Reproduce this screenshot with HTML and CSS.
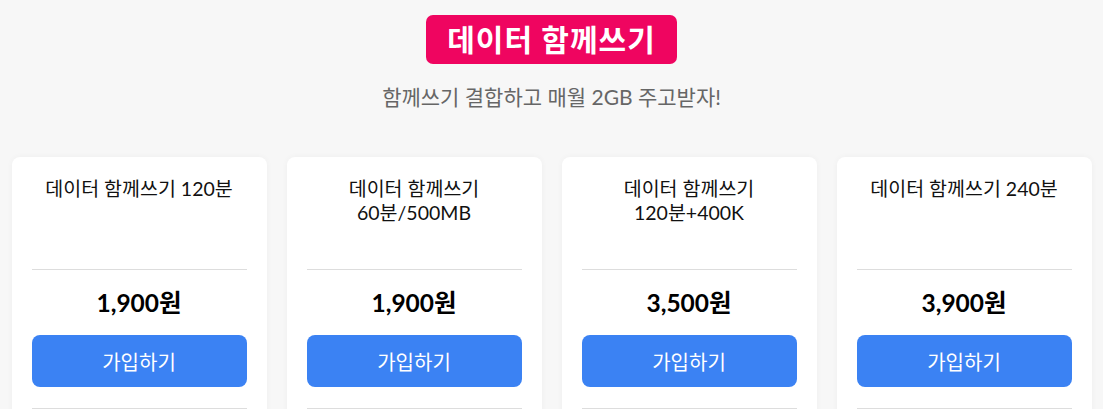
FILE: index.html
```html
<!DOCTYPE html>
<html lang="ko">
<head>
    <meta charset="UTF-8">
    <title>데이터 함께쓰기</title>
    <link rel="stylesheet" href="styles.css">
</head>
<body>
    <header>
        <h1>데이터 함께쓰기</h1>
        <p class="subtitle">함께쓰기 결합하고 매월 2GB 주고받자!</p>
    </header>
    <div id="plans">
        <div class="card">
            <div class="title">데이터 함께쓰기 120분</div>
            <div class="price">1,900원</div>
            <button type="button">가입하기</button>
            <div class="more"></div>
        </div>
        <div class="card">
            <div class="title">데이터 함께쓰기<br>60분/500MB</div>
            <div class="price">1,900원</div>
            <button type="button">가입하기</button>
            <div class="more"></div>
        </div>
        <div class="card">
            <div class="title">데이터 함께쓰기<br>120분+400K</div>
            <div class="price">3,500원</div>
            <button type="button">가입하기</button>
            <div class="more"></div>
        </div>
        <div class="card">
            <div class="title">데이터 함께쓰기 240분</div>
            <div class="price">3,900원</div>
            <button type="button">가입하기</button>
            <div class="more"></div>
        </div>
    </div>
</body>
</html>
```

FILE: styles.css
```css
body {
    font-family: Lato, "Noto Sans CJK KR", sans-serif;
    margin: 0;
    padding: 0;
    background-color: #f7f7f7;
    color: #111;
}

header {
    text-align: center;
    padding-top: 15px;
}

h1 {
    display: inline-block;
    margin: 0;
    padding: 0 21px;
    height: 49px;
    line-height: 48px;
    font-size: 30px;
    font-weight: bold;
    letter-spacing: 1px;
    color: #fff;
    background-color: #ef0560;
    border-radius: 7px;
}

.subtitle {
    margin: 19px 0 0;
    font-size: 21px;
    line-height: 28px;
    color: #666;
}

#plans {
    max-width: 1080px;
    margin: 46px auto 0;
    display: grid;
    grid-template-columns: repeat(4, 1fr);
    gap: 20px;
}

.card {
    background-color: #fff;
    border-radius: 8px;
    padding: 20px 20px 0;
    box-shadow: 0 0 6px rgba(0, 0, 0, 0.04);
}

.title {
    min-height: 72px;
    padding-bottom: 20px;
    border-bottom: 1px solid #ddd;
    text-align: center;
    font-size: 19.5px;
    line-height: 24px;
}

.price {
    padding: 17px 0;
    text-align: center;
    font-size: 24.5px;
    font-weight: bold;
    line-height: 31px;
    color: #000;
}

button {
    display: block;
    width: 100%;
    height: 52px;
    background-color: #3b82f3;
    color: #fff;
    border: none;
    border-radius: 8px;
    font-family: inherit;
    font-size: 20px;
    cursor: pointer;
}

.more {
    margin-top: 21px;
    border-top: 1px solid #ddd;
    height: 40px;
}
```
